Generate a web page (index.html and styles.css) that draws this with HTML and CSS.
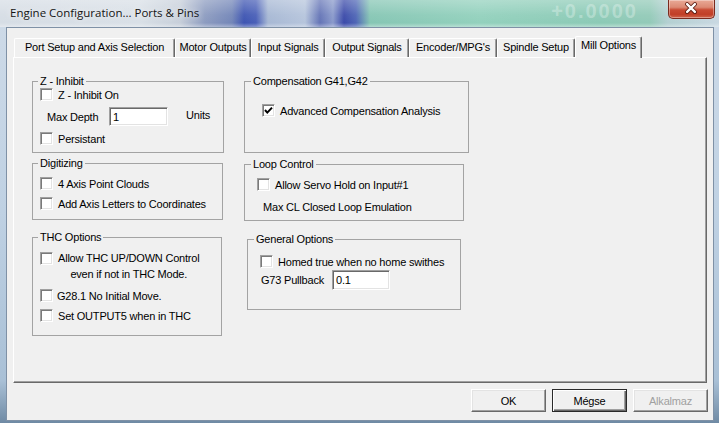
FILE: index.html
```html
<!DOCTYPE html>
<html>
<head>
<meta charset="utf-8">
<link rel="stylesheet" href="styles.css">
</head>
<body>
<div class="window">
  <div class="titlebar">
    <span class="title">Engine Configuration... Ports &amp; Pins</span>
    <span class="ghost">+0.0000</span>
    <span class="close">
      <svg width="47" height="19" viewBox="0 0 47 19">
        <path d="M19.5 5 L27.5 13 M27.5 5 L19.5 13" stroke="#5a1a10" stroke-width="4.2" stroke-linecap="round" fill="none"/>
        <path d="M19.5 5 L27.5 13 M27.5 5 L19.5 13" stroke="#ffffff" stroke-width="2.4" stroke-linecap="round" fill="none"/>
      </svg>
    </span>
  </div>
  <div class="client">
    <div class="tabs">
      <div class="tab t1">Port Setup and Axis Selection</div>
      <div class="tab t2">Motor Outputs</div>
      <div class="tab t3">Input Signals</div>
      <div class="tab t4">Output Signals</div>
      <div class="tab t5">Encoder/MPG's</div>
      <div class="tab t6">Spindle Setup</div>
      <div class="tab active">Mill Options</div>
    </div>
    <div class="panel">
      <div class="col col-left">
        <fieldset class="grp g-z">
          <legend>Z - Inhibit</legend>
          <div class="gbody">
            <div class="row"><span class="cb"></span><span>Z - Inhibit On</span></div>
            <div class="row depth">
              <span class="lbl-depth">Max Depth</span>
              <span class="input in-depth">1</span>
              <span class="units">Units</span>
            </div>
            <div class="row r-persist"><span class="cb"></span><span>Persistant</span></div>
          </div>
        </fieldset>
        <fieldset class="grp g-dig">
          <legend>Digitizing</legend>
          <div class="gbody">
            <div class="row"><span class="cb"></span><span>4 Axis Point Clouds</span></div>
            <div class="row"><span class="cb"></span><span>Add Axis Letters to Coordinates</span></div>
          </div>
        </fieldset>
        <fieldset class="grp g-thc">
          <legend>THC Options</legend>
          <div class="gbody">
            <div class="row multi"><span class="cb"></span><span class="two">Allow THC UP/DOWN Control<br>even if not in THC Mode.</span></div>
            <div class="row"><span class="cb"></span><span class="g28">G28.1 No Initial Move.</span></div>
            <div class="row"><span class="cb"></span><span>Set OUTPUT5 when in THC</span></div>
          </div>
        </fieldset>
      </div>
      <div class="col col-right">
        <fieldset class="grp g-comp">
          <legend>Compensation G41,G42</legend>
          <div class="gbody">
            <div class="row"><span class="cb checked"><svg width="11" height="11" viewBox="0 0 11 11"><path d="M2 5 L4.3 7.6 L9 2.6" stroke="#000" stroke-width="2" fill="none"/></svg></span><span>Advanced Compensation Analysis</span></div>
          </div>
        </fieldset>
        <fieldset class="grp g-loop">
          <legend>Loop Control</legend>
          <div class="gbody">
            <div class="row"><span class="cb"></span><span>Allow Servo Hold on Input#1</span></div>
            <div class="row r-maxcl"><span>Max CL Closed Loop Emulation</span></div>
          </div>
        </fieldset>
        <fieldset class="grp g-gen">
          <legend>General Options</legend>
          <div class="gbody">
            <div class="row"><span class="cb"></span><span>Homed true when no home swithes</span></div>
            <div class="row pull">
              <span class="lbl-pull">G73 Pullback</span>
              <span class="input in-pull">0.1</span>
            </div>
          </div>
        </fieldset>
      </div>
    </div>
    <div class="buttons">
      <div class="btn">OK</div>
      <div class="btn default">Mégse</div>
      <div class="btn disabled">Alkalmaz</div>
    </div>
  </div>
</div>
</body>
</html>
```

FILE: styles.css
```css
* { box-sizing: border-box; }
html, body { margin: 0; padding: 0; }
body {
  width: 719px;
  height: 423px;
  overflow: hidden;
  font-family: "Liberation Sans", Arial, sans-serif;
  font-size: 11px;
  letter-spacing: -0.2px;
  color: #000;
}
.window {
  width: 719px;
  height: 423px;
  display: flex;
  flex-direction: column;
  background: linear-gradient(180deg, #cfdbe8 0%, #bfd1e3 50%, #a9c0d6 90%, #6f8aa4 100%);
}
.titlebar {
  height: 27px;
  flex: none;
  display: flex;
  align-items: flex-start;
  background:
    linear-gradient(180deg, rgba(255,255,255,0.28) 0%, rgba(255,255,255,0.05) 55%, rgba(255,255,255,0) 85%, rgba(255,255,255,0.35) 100%),
    linear-gradient(90deg, #d6dde5 0px, #d9e0e7 140px, #c7cfda 180px, #8d9cc0 205px, #7386b8 232px, #3e55b2 244px, #4a60b8 256px, #a7b8d4 268px, #b6c5dc 305px, #6474b6 320px, #8a9acb 333px, #3b4aa9 344px, #4f66b6 356px, #86c6b4 370px, #93d1bd 480px, #8ccab6 600px, #93cab8 650px, #b4d0d2 668px, #c9d8e2 719px);
}
.title {
  font-family: "Open Sans", "Noto Sans", sans-serif;
  font-size: 11.5px;
  letter-spacing: 0;
  color: #141414;
  margin: 5px 0 0 10px;
  white-space: nowrap;
  text-shadow: 0 0 6px rgba(255,255,255,0.9);
}
.ghost {
  margin-left: auto;
  margin-top: 1px;
  font-family: "Liberation Sans", sans-serif;
  font-size: 20px;
  line-height: 20px;
  font-weight: bold;
  letter-spacing: 2px;
  color: rgba(255,255,255,0.3);
  white-space: nowrap;
}
.close {
  margin-left: 30px;
  margin-right: 4px;
  width: 47px;
  height: 19px;
  flex: none;
  border: 1px solid #7a2a1e;
  border-top: none;
  border-radius: 0 0 5px 5px;
  background: linear-gradient(180deg, #e9a996 0%, #dc8a74 40%, #c84a32 55%, #c13f27 80%, #d0664c 100%);
  box-shadow: inset 0 0 0 1px rgba(255,255,255,0.35);
  display: flex;
}
.close svg { display: block; margin: -1px 0 0 -1px; }

.client {
  flex: 1;
  margin: 0 5px 2px 6px;
  border: 1px solid #7f91a6;
  background: #f0f0f0;
  display: flex;
  flex-direction: column;
}
.tabs {
  height: 29px;
  flex: none;
  display: flex;
  align-items: flex-end;
  padding-left: 7px;
}
.tab {
  height: 19px;
  line-height: 17px;
  text-align: center;
  white-space: nowrap;
  border-top: 1px solid #fff;
  border-left: 1px solid #fff;
  border-right: 1px solid #696969;
  box-shadow: inset -1px 0 0 #a0a0a0;
  border-radius: 2px 2px 0 0;
}
.t1 { width: 161px; }
.t2 { width: 76px; }
.t3 { width: 74px; }
.t4 { width: 84px; }
.t5 { width: 88px; }
.t6 { width: 78px; }
.tab.active {
  width: 67px;
  height: 22px;
  line-height: 16px;
  margin-bottom: -1px;
  background: #f0f0f0;
  position: relative;
  z-index: 2;
}
.panel {
  margin-left: 6px;
  width: 694px;
  height: 326px;
  flex: none;
  border-top: 1px solid #fff;
  border-left: 1px solid #fff;
  border-right: 1px solid #696969;
  border-bottom: 1px solid #696969;
  box-shadow: inset -1px -1px 0 #a0a0a0;
  padding: 17px 0 0 18px;
  display: flex;
  gap: 20px;
}
.col {
  display: flex;
  flex-direction: column;
  align-items: flex-start;
}
.col-left { width: 192px; }

.grp {
  margin: 0;
  padding: 0;
  border: 1px solid #a3a3a3;
  min-width: 0;
}
.grp legend {
  padding: 0 2px;
  margin-left: 5px;
  line-height: 13px;
  height: 13px;
}
.col-right .grp legend { margin-left: 6px; }
.gbody {
  display: flex;
  flex-direction: column;
  align-items: flex-start;
}

.row {
  display: flex;
  align-items: center;
  gap: 5px;
  height: 13px;
  white-space: nowrap;
}
.cb {
  width: 13px;
  height: 13px;
  flex: none;
  background: #fff;
  border: 1px solid;
  border-color: #a0a0a0 #fff #fff #a0a0a0;
  box-shadow: inset 1px 1px 0 #7a7a7a, inset -1px -1px 0 #e3e3e3;
  display: flex;
  align-items: center;
  justify-content: center;
}
.cb svg { display: block; }
.input {
  background: #fff;
  border: 1px solid;
  border-color: #a0a0a0 #fff #fff #a0a0a0;
  box-shadow: inset 1px 1px 0 #696969, inset -1px -1px 0 #e3e3e3;
  padding-left: 3px;
  display: flex;
  align-items: center;
  flex: none;
}

/* Z - Inhibit */
.g-z { width: 192px; height: 78px; }
.g-z .gbody { padding-left: 7px; }
.row.depth { height: 19px; margin-top: 6px; gap: 0; }
.lbl-depth { width: 69px; padding-left: 7px; }
.in-depth { width: 59px; height: 19px; }
.units { margin-left: 18px; margin-top: -3px; }
.r-persist { margin-top: 6px; }

/* Digitizing */
.g-dig { width: 191px; height: 63px; margin-top: 4px; }
.g-dig .gbody { padding-left: 7px; }
.g-dig .row { margin-top: 7px; }

/* THC */
.g-thc { width: 190px; height: 105px; margin-top: 11px; }
.g-thc .gbody { padding-left: 7px; }
.g-thc .row { margin-top: 7px; }
.g-thc .row.multi { margin-top: 6px; height: 32px; align-items: flex-start; }
.g-thc .row.multi .cb { margin-top: 2px; }
.two { line-height: 16px; text-align: center; }
.g28 { margin-left: -1px; }

/* Compensation */
.g-comp { width: 225px; height: 78px; }
.g-comp .gbody { padding-left: 17px; }
.g-comp .row { margin-top: 16px; }

/* Loop */
.g-loop { width: 220px; height: 63px; margin-top: 5px; }
.g-loop .gbody { padding-left: 12px; }
.g-loop .row { margin-top: 7px; }
.g-loop .row.r-maxcl { margin-top: 9px; padding-left: 6px; }

/* General */
.g-gen { width: 214px; height: 77px; margin-top: 12px; margin-left: 3px; }
.g-gen .gbody { padding-left: 12px; }
.g-gen .row { margin-top: 9px; }
.g-gen .row.pull { margin-top: 2px; height: 20px; gap: 0; }
.lbl-pull { width: 72px; padding-left: 1px; }
.in-pull { width: 58px; height: 20px; }

/* Buttons */
.buttons {
  display: flex;
  justify-content: flex-end;
  gap: 6px;
  padding-right: 5px;
  margin-top: 6px;
}
.btn {
  width: 75px;
  height: 23px;
  display: flex;
  align-items: center;
  justify-content: center;
  background: #f0f0f0;
  border: 1px solid;
  border-color: #fff #696969 #696969 #fff;
  box-shadow: inset -1px -1px 0 #a0a0a0, inset 1px 1px 0 #e3e3e3;
}
.btn.default {
  border: 1px solid #2a2a2a;
  box-shadow: inset 1px 1px 0 #fff, inset -1px -1px 0 #696969, inset -2px -2px 0 #a0a0a0;
}
.btn.disabled { color: #a0a0a0; }
```
